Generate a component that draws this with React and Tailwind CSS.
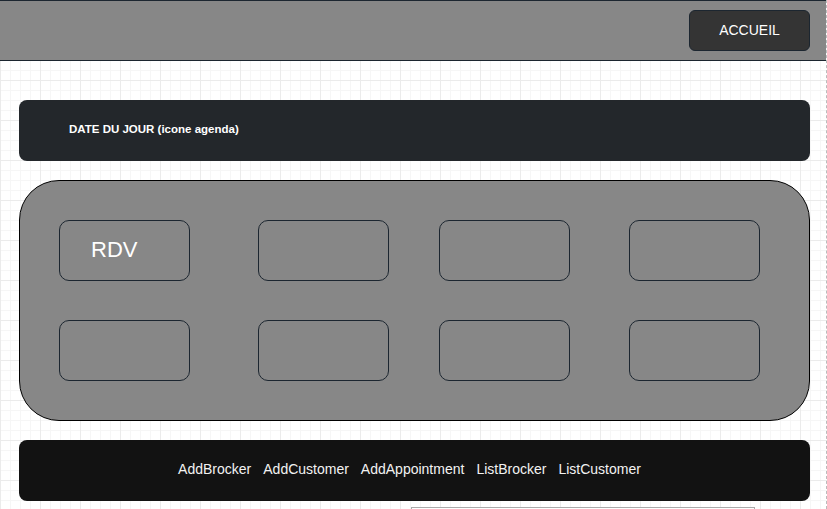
import React from "react";

const links = ["AddBrocker", "AddCustomer", "AddAppointment", "ListBrocker", "ListCustomer"];

function Tile({ label }) {
  return (
    <div className="w-[131px] h-[61px] rounded-[10px] border border-[#1c2630] flex items-center pl-[31px] pb-[2px]">
      {label && <span className="text-white text-[22px] leading-none">{label}</span>}
    </div>
  );
}

const App = () => {
  return (
    <div
      className="w-[827px] h-[509px] overflow-hidden bg-white font-['Liberation_Sans',Arial,sans-serif] border-r border-dashed border-r-[#bbbbbb]"
      style={{
        backgroundImage:
          "linear-gradient(#ebebeb 1px, transparent 1px), linear-gradient(90deg, #ebebeb 1px, transparent 1px), linear-gradient(#f6f6f6 1px, transparent 1px), linear-gradient(90deg, #f6f6f6 1px, transparent 1px)",
        backgroundSize: "40px 40px, 40px 40px, 10px 10px, 10px 10px",
      }}
    >
      <header className="h-[61px] bg-[#878787] border-y border-[#1c2630] flex items-center justify-end pr-[16px]">
        <button className="w-[121px] h-[41px] rounded-[6px] bg-[#343434] border border-[#1c2630] text-white text-[14px]">
          ACCUEIL
        </button>
      </header>

      <div className="pl-[19px] pr-[16px] pt-[39px] flex flex-col gap-[20px] w-full">
        <div className="h-[61px] rounded-[8px] bg-[#23272b] flex items-center pl-[50px] pb-[1px]">
          <span className="text-white text-[11.5px] font-bold">DATE DU JOUR (icone agenda)</span>
        </div>

        <div className="h-[241px] -mt-[1px] rounded-[40px] bg-[#878787] border border-black pl-[39px] pt-[39px] flex flex-col gap-[39px]">
          <div className="grid grid-cols-[199px_181px_190px_131px]">
            <Tile label="RDV" />
            <Tile />
            <Tile />
            <Tile />
          </div>
          <div className="grid grid-cols-[199px_181px_190px_131px]">
            <Tile />
            <Tile />
            <Tile />
            <Tile />
          </div>
        </div>

        <div className="h-[61px] -mt-[1px] rounded-[8px] bg-[#121212] flex items-center justify-center gap-[12px] pr-[10px] pb-[3px] text-[#f2f2f2] text-[14px]">
          {links.map((l) => (
            <span key={l}>{l}</span>
          ))}
        </div>
      </div>
      <div className="mt-[6px] ml-[411px] w-[344px] h-[10px] border border-[#aaaaaa] bg-white"></div>
    </div>
  );
};

export default App;
